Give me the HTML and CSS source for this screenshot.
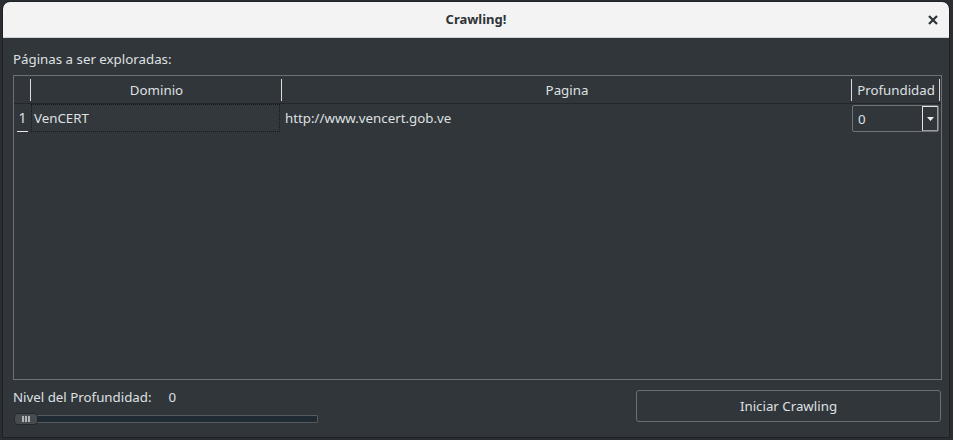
FILE: index.html
```html
<!DOCTYPE html>
<html lang="es">
<head>
<meta charset="utf-8">
<title>Crawling!</title>
<link rel="stylesheet" href="styles.css">
</head>
<body>
<div class="window">
  <div class="titlebar">
    <span class="title">Crawling!</span>
    <span class="close">
      <svg width="10" height="10" viewBox="0 0 10 10"><path d="M1 1L9 9M9 1L1 9" stroke="#2e3436" stroke-width="2.2" stroke-linecap="butt"/></svg>
    </span>
  </div>
  <div class="content">
    <div class="label">Páginas a ser exploradas:</div>
    <div class="table">
      <div class="header">
        <div class="hcell corner"></div>
        <div class="hcell c-dom">Dominio</div>
        <div class="hcell c-pag">Pagina</div>
        <div class="hcell c-prof">Profundidad</div>
      </div>
      <div class="row">
        <div class="rownum"><span>1</span></div>
        <div class="cell c-dom focus">VenCERT</div>
        <div class="cell c-pag">http://www.vencert.gob.ve</div>
        <div class="cell c-prof">
          <div class="combo">
            <span class="combo-val">0</span>
            <span class="combo-btn"><svg width="7" height="4" viewBox="0 0 7 4"><path d="M0 0H7L3.5 4Z" fill="#f0f0f0"/></svg></span>
          </div>
        </div>
      </div>
    </div>
    <div class="bottom">
      <div class="left">
        <div class="level"><span>Nivel del Profundidad:</span><span class="lvl-val">0</span></div>
        <div class="slider">
          <div class="handle"><span class="grip"></span></div>
        </div>
      </div>
      <button class="btn">Iniciar Crawling</button>
    </div>
  </div>
</div>
</body>
</html>
```

FILE: styles.css
```css
* { box-sizing: border-box; }
html, body { margin: 0; padding: 0; }
body {
  width: 953px;
  height: 440px;
  background: #2a2d31;
  font-family: "Noto Sans", "Open Sans", sans-serif;
  font-size: 13.3px;
  color: #dfe0e1;
  overflow: hidden;
  padding: 1px 3px 2px 2px;
}
.window {
  height: 437px;
  background: #31363b;
  border-radius: 8px 8px 0 0;
  border: 1px solid #1e2124;
  display: flex;
  flex-direction: column;
  overflow: hidden;
}
.titlebar {
  height: 36px;
  flex: none;
  background: #f3f3f3;
  border-bottom: 1px solid #d2d2d2;
  display: flex;
  align-items: center;
  justify-content: center;
  position: relative;
  color: #2e3436;
}
.title {
  font-weight: bold;
  font-size: 13px;
  margin-top: -1px;
}
.close {
  position: absolute;
  right: 11px;
  top: 13px;
  width: 10px;
  height: 10px;
  display: flex;
}
.content {
  flex: 1;
  padding: 10px 8px 0 10px;
  display: flex;
  flex-direction: column;
}
.label {
  height: 22px;
  line-height: 22px;
  margin-bottom: 5px;
}
.table {
  height: 305px;
  border: 1px solid #6d7074;
  width: 929px;
}
.header {
  display: flex;
  height: 28px;
  border-bottom: 1px solid #23262a;
}
.hcell {
  display: flex;
  align-items: center;
  justify-content: center;
  position: relative;
}
.hcell::after {
  content: "";
  position: absolute;
  right: 0;
  top: 3px;
  bottom: 2px;
  width: 1px;
  background: #dcdcdc;
}
.corner { width: 17px; }
.c-dom { width: 251px; }
.c-pag { width: 570px; }
.c-prof { width: 88px; }
.row {
  display: flex;
  height: 28px;
}
.rownum {
  width: 17px;
  display: flex;
  justify-content: center;
  align-items: center;
}
.rownum span {
  display: inline-block;
  border-bottom: 1px solid #e8e9ea;
  width: 11px;
  text-align: center;
  line-height: 26px;
  height: 28px;
  padding-top: 1px;
  font-size: 14px;
}
.cell {
  display: flex;
  align-items: center;
  padding-left: 3px;
}
.cell.focus {
  border: 1px dotted #15181b;
  background: #33383d;
  padding-left: 2px;
  width: 249px;
  margin-right: 2px;
}
.row .c-prof {
  padding: 1px 0 0 0;
  align-items: stretch;
}
.combo {
  flex: 1;
  height: 27px;
  margin-right: 1px;
  border: 1px solid #707377;
  border-radius: 2px;
  display: flex;
  align-items: center;
  justify-content: space-between;
  padding-left: 5px;
}
.combo-btn {
  width: 16px;
  height: 25px;
  border: 1px solid #e4e4e4;
  border-right-color: #9a9c9e;
  border-bottom-color: #9a9c9e;
  display: flex;
  align-items: center;
  justify-content: center;
  background: #31363b;
}
.bottom {
  display: flex;
  justify-content: space-between;
  margin-top: 6px;
}
.left {
  width: 305px;
  display: flex;
  flex-direction: column;
}
.level {
  height: 22px;
  line-height: 22px;
}
.lvl-val { margin-left: 17px; }
.slider {
  margin-top: 5px;
  height: 12px;
  position: relative;
  display: flex;
  align-items: center;
  margin-left: 1px;
}
.slider::before {
  content: "";
  display: block;
  width: 100%;
  height: 6px;
  background: #1f2a33;
  border: 1px solid #565a5e;
  border-radius: 1px;
}
.handle {
  position: absolute;
  left: 0;
  top: 0;
  width: 24px;
  height: 12px;
  background: #474c51;
  border: 1px solid #24282c;
  border-radius: 4px;
  display: flex;
  align-items: center;
  justify-content: center;
}
.grip {
  width: 9px;
  height: 6px;
  background-image: radial-gradient(circle at 1px 1px, #b0b3b6 0.9px, transparent 1px);
  background-size: 3px 2px;
}
.btn {
  width: 305px;
  height: 32px;
  margin-top: 4px;
  background: #31363b;
  border: 1px solid #6b6e72;
  border-radius: 3px;
  color: #dfe0e1;
  font-family: inherit;
  font-size: 13.3px;
}
```
